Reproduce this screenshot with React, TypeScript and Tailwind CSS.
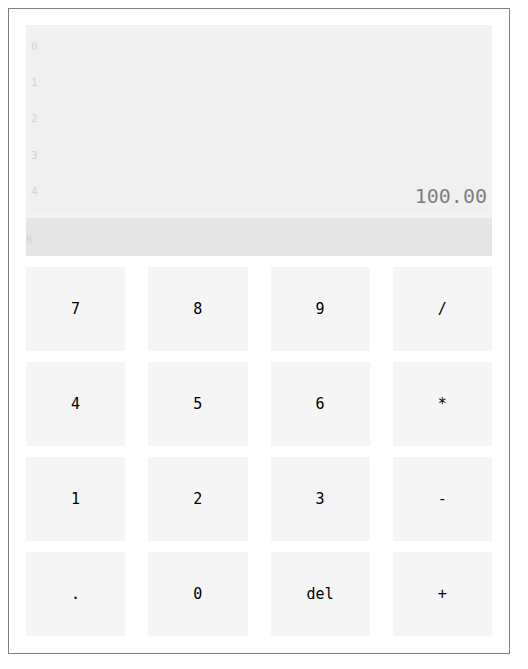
const rows = [0, 1, 2, 3, 4];
const keys = ["7", "8", "9", "/", "4", "5", "6", "*", "1", "2", "3", "-", ".", "0", "del", "+"];

export default function App() {
  return (
    <main className="m-2 mr-[18px] border border-[#808080] bg-white p-[17px] pt-4 font-['DejaVu_Sans_Mono',monospace]">
      <section aria-label="History" className="bg-[#f2f2f2] px-[5px] py-1.5">
        <ol className="grid h-[181px] grid-rows-5 bg-[#f0f0f0]">
          {rows.map((n) => (
            <li key={n} className="flex items-start justify-between">
              <span className="text-[11px] leading-8 text-[#d3d3d3]">{n}</span>
              {n === 4 && <output className="pt-1 text-xl leading-8 text-[#808080]">100.00</output>}
            </li>
          ))}
        </ol>
      </section>
      <label className="flex h-[38px] items-center bg-[#e5e5e5] pt-1.5">
        <span className="text-[11px] text-[#d3d3d3]">6</span>
        <input aria-label="Expression" className="h-full min-w-0 flex-1 bg-transparent px-1 text-right text-xl outline-none" />
      </label>
      <div className="mt-[11px] grid grid-cols-4 gap-x-[23px] gap-y-[11px]">
        {keys.map((k) => (
          <button key={k} type="button" className="h-[84px] bg-[#f5f5f5] text-[15px] text-black">
            {k}
          </button>
        ))}
      </div>
    </main>
  );
}
